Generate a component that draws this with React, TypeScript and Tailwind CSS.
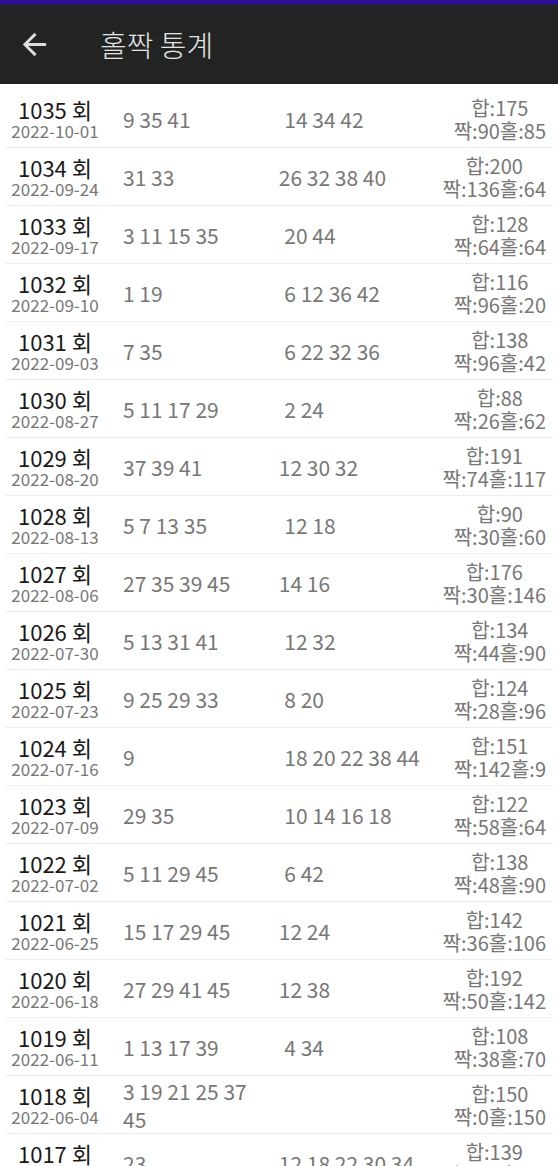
import React from 'react';

type Draw = { no: number; date: string; odd: string; even: string; sum: number; evenSum: number; oddSum: number };

const draws: Draw[] = [
  { no: 1035, date: '2022-10-01', odd: '9 35 41', even: '14 34 42', sum: 175, evenSum: 90, oddSum: 85 },
  { no: 1034, date: '2022-09-24', odd: '31 33', even: '26 32 38 40', sum: 200, evenSum: 136, oddSum: 64 },
  { no: 1033, date: '2022-09-17', odd: '3 11 15 35', even: '20 44', sum: 128, evenSum: 64, oddSum: 64 },
  { no: 1032, date: '2022-09-10', odd: '1 19', even: '6 12 36 42', sum: 116, evenSum: 96, oddSum: 20 },
  { no: 1031, date: '2022-09-03', odd: '7 35', even: '6 22 32 36', sum: 138, evenSum: 96, oddSum: 42 },
  { no: 1030, date: '2022-08-27', odd: '5 11 17 29', even: '2 24', sum: 88, evenSum: 26, oddSum: 62 },
  { no: 1029, date: '2022-08-20', odd: '37 39 41', even: '12 30 32', sum: 191, evenSum: 74, oddSum: 117 },
  { no: 1028, date: '2022-08-13', odd: '5 7 13 35', even: '12 18', sum: 90, evenSum: 30, oddSum: 60 },
  { no: 1027, date: '2022-08-06', odd: '27 35 39 45', even: '14 16', sum: 176, evenSum: 30, oddSum: 146 },
  { no: 1026, date: '2022-07-30', odd: '5 13 31 41', even: '12 32', sum: 134, evenSum: 44, oddSum: 90 },
  { no: 1025, date: '2022-07-23', odd: '9 25 29 33', even: '8 20', sum: 124, evenSum: 28, oddSum: 96 },
  { no: 1024, date: '2022-07-16', odd: '9', even: '18 20 22 38 44', sum: 151, evenSum: 142, oddSum: 9 },
  { no: 1023, date: '2022-07-09', odd: '29 35', even: '10 14 16 18', sum: 122, evenSum: 58, oddSum: 64 },
  { no: 1022, date: '2022-07-02', odd: '5 11 29 45', even: '6 42', sum: 138, evenSum: 48, oddSum: 90 },
  { no: 1021, date: '2022-06-25', odd: '15 17 29 45', even: '12 24', sum: 142, evenSum: 36, oddSum: 106 },
  { no: 1020, date: '2022-06-18', odd: '27 29 41 45', even: '12 38', sum: 192, evenSum: 50, oddSum: 142 },
  { no: 1019, date: '2022-06-11', odd: '1 13 17 39', even: '4 34', sum: 108, evenSum: 38, oddSum: 70 },
  { no: 1018, date: '2022-06-04', odd: '3 19 21 25 37 45', even: '', sum: 150, evenSum: 0, oddSum: 150 },
  { no: 1017, date: '2022-05-28', odd: '23', even: '12 18 22 30 34', sum: 139, evenSum: 116, oddSum: 23 },
];

const font = { fontFamily: '"Noto Sans CJK KR", "Noto Sans", sans-serif' };

export default function App() {
  return (
    <div className="w-[558px] h-[1166px] overflow-hidden bg-white" style={font}>
      <div className="h-[4px] bg-[#2a1196]" />
      <header className="h-[80px] bg-[#222423] flex items-center">
        <svg width="35" height="35" viewBox="0 0 24 24" className="ml-[17px]" fill="#dcdcdc">
          <path d="M20 11H7.83l5.59-5.59L12 4l-8 8 8 8 1.41-1.41L7.83 13H20v-2z" />
        </svg>
        <h1 className="ml-[48px] text-[29px] font-light text-[#e4e4e4] leading-none">홀짝 통계</h1>
      </header>

      <ul className="mx-[5px] pt-[6px]">
        {draws.map((d) => (
          <li key={d.no} className="h-[58px] flex items-center border-b border-[#eeeeee] pr-[7px]">
            <div className="w-[100px] flex flex-col items-center">
              <span className="text-[22px] leading-[24px] text-[#1a1a1a]">{d.no} 회</span>
              <span className="text-[17px] leading-[20px] text-[#777777]">{d.date}</span>
            </div>
            <div className="flex-1 basis-0 min-w-0 ml-[18px]">
              <div className="pr-[32px] text-[21px] leading-[28px] text-[#777777]">{d.odd}</div>
            </div>
            <div className="flex-1 basis-0 min-w-0 text-[21px] leading-[28px] text-[#777777] whitespace-nowrap">{d.even}</div>
            <div className="pl-[8px] flex flex-col items-center text-[20px] leading-[23px] text-[#777777] whitespace-nowrap">
              <span>합:{d.sum}</span>
              <span>짝:{d.evenSum}홀:{d.oddSum}</span>
            </div>
          </li>
        ))}
      </ul>
    </div>
  );
}
